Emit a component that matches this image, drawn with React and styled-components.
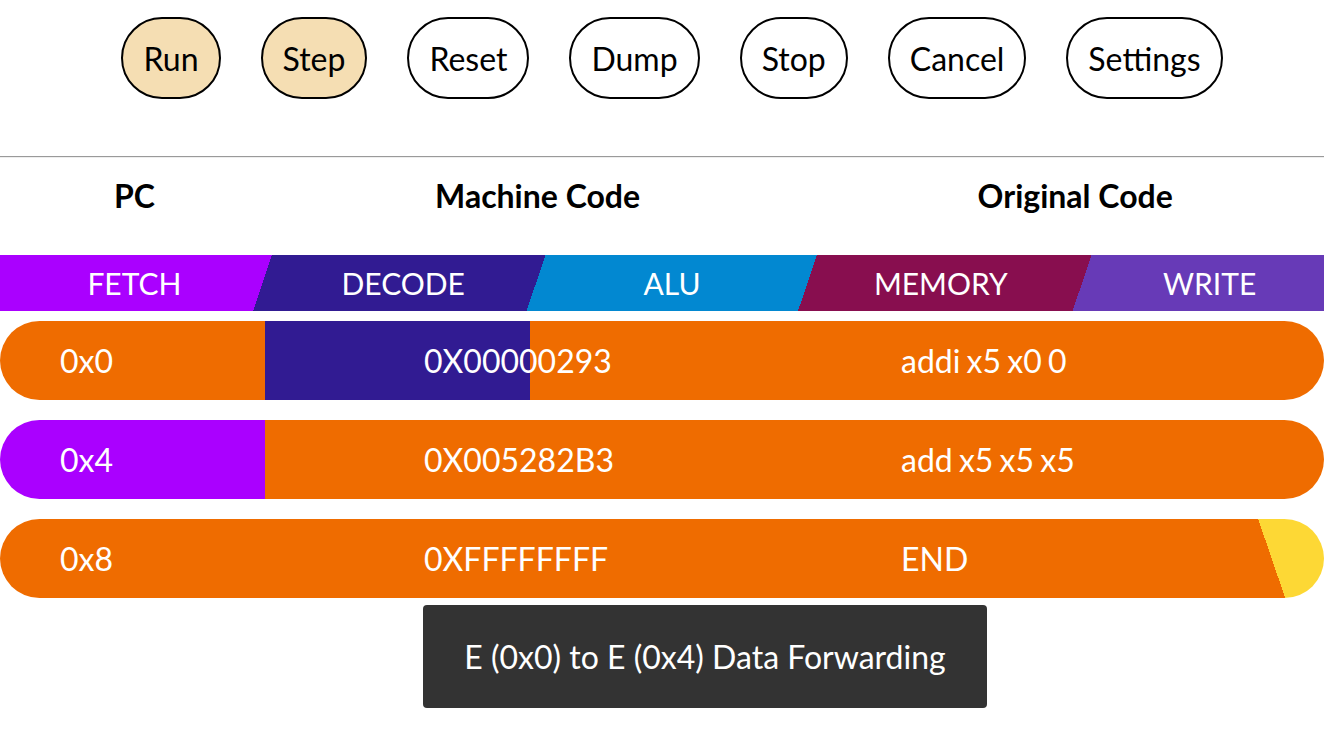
import React from 'react'
import styled, { createGlobalStyle } from 'styled-components'

const GlobalStyle = createGlobalStyle`
  html, body {
    margin: 0;
    padding: 0;
    background: #fff;
    overflow: hidden;
  }
  body {
    font-family: Lato, "Open Sans", sans-serif;
  }
`

const ORANGE = '#EF6C00'

// pipeline stages, left to right
const STAGES = ['FETCH', 'DECODE', 'ALU', 'MEMORY', 'WRITE']

const BUTTONS = [
  { label: 'Run', active: true },
  { label: 'Step', active: true },
  { label: 'Reset' },
  { label: 'Dump' },
  { label: 'Stop' },
  { label: 'Cancel' },
  { label: 'Settings' },
]

const ROWS = [
  {
    pc: '0x0',
    machine: '0X00000293',
    code: 'addi x5 x0 0',
    fill: `linear-gradient(to right, ${ORANGE} 20%, #311B92 20% 40%, ${ORANGE} 40%)`,
  },
  {
    pc: '0x4',
    machine: '0X005282B3',
    code: 'add x5 x5 x5',
    fill: `linear-gradient(to right, #AA00FF 20%, ${ORANGE} 20%)`,
  },
  {
    pc: '0x8',
    machine: '0XFFFFFFFF',
    code: 'END',
    fill: `linear-gradient(71.1deg, ${ORANGE} 1215.9px, #FDD835 1215.9px)`,
  },
]

const Page = styled.div`
  position: relative;
  width: 100%;
  min-height: 730px;
`

const Toolbar = styled.div`
  width: calc(100% + 20px);
  display: flex;
  justify-content: center;
  gap: 40px;
  padding-top: 17px;
`

const Button = styled.button`
  height: 82px;
  padding: 0 20px;
  border: 2px solid #000;
  border-radius: 41px;
  background: ${(p) => (p.$active ? '#F5DEB3' : '#fff')};
  color: #000;
  font-family: Lato, sans-serif;
  font-size: 32px;
  cursor: pointer;
`

const Rule = styled.hr`
  margin: 57px 0 0;
  border: none;
  border-top: 1px solid #9a9a9a;
  border-bottom: 1px solid #eee;
`

const Header = styled.div`
  width: calc(100% + 20px);
  display: grid;
  grid-template-columns: 1fr 2fr 2fr;
  padding: 20px 0 41px;
`

const HeaderCell = styled.div`
  text-align: center;
  font-family: Lato, sans-serif;
  font-weight: 700;
  font-size: 32px;
  line-height: 36px;
  color: #000;
`

const StageBar = styled.div`
  width: calc(100% + 20px);
  height: 56px;
  display: flex;
  background: linear-gradient(
    108.7deg,
    #AA00FF 257.6px,
    #311B92 257.6px 516.7px,
    #0288D1 516.7px 773.8px,
    #880E4F 773.8px 1033.9px,
    #673AB7 1033.9px
  );
`

const Stage = styled.div`
  flex: 1;
  display: flex;
  align-items: center;
  justify-content: center;
  color: #fff;
  font-family: Lato, sans-serif;
  font-size: 30px;
`

const Rows = styled.div`
  display: flex;
  flex-direction: column;
  gap: 20px;
  padding-top: 10px;
`

const Row = styled.div`
  height: 79px;
  border-radius: 40px;
  background: ${(p) => p.$fill};
  display: grid;
  grid-template-columns: 364px 477px 1fr;
  align-items: center;
  padding-left: 60px;
  color: #fff;
  font-family: Lato, sans-serif;
  font-size: 32px;
`

const Cell = styled.span`
  white-space: nowrap;
`

const CodeCell = styled(Cell)`
  word-spacing: -2px;
`

const Tooltip = styled.div`
  position: absolute;
  top: 605px;
  left: 423px;
  width: 564px;
  height: 103px;
  box-sizing: border-box;
  display: flex;
  align-items: center;
  justify-content: center;
  background: #333;
  border-radius: 4px;
  color: #fff;
  font-family: Lato, sans-serif;
  font-size: 32px;
`

export default function App() {
  return (
    <Page>
      <GlobalStyle />
      <Toolbar>
        {BUTTONS.map((b) => (
          <Button key={b.label} $active={b.active}>
            {b.label}
          </Button>
        ))}
      </Toolbar>
      <Rule />
      <Header>
        <HeaderCell>PC</HeaderCell>
        <HeaderCell>Machine Code</HeaderCell>
        <HeaderCell>Original Code</HeaderCell>
      </Header>
      <StageBar>
        {STAGES.map((s) => (
          <Stage key={s}>{s}</Stage>
        ))}
      </StageBar>
      <Rows>
        {ROWS.map((r) => (
          <Row key={r.pc} $fill={r.fill}>
            <Cell>{r.pc}</Cell>
            <Cell>{r.machine}</Cell>
            <CodeCell>{r.code}</CodeCell>
          </Row>
        ))}
      </Rows>
      <Tooltip>E (0x0) to E (0x4) Data Forwarding</Tooltip>
    </Page>
  )
}
